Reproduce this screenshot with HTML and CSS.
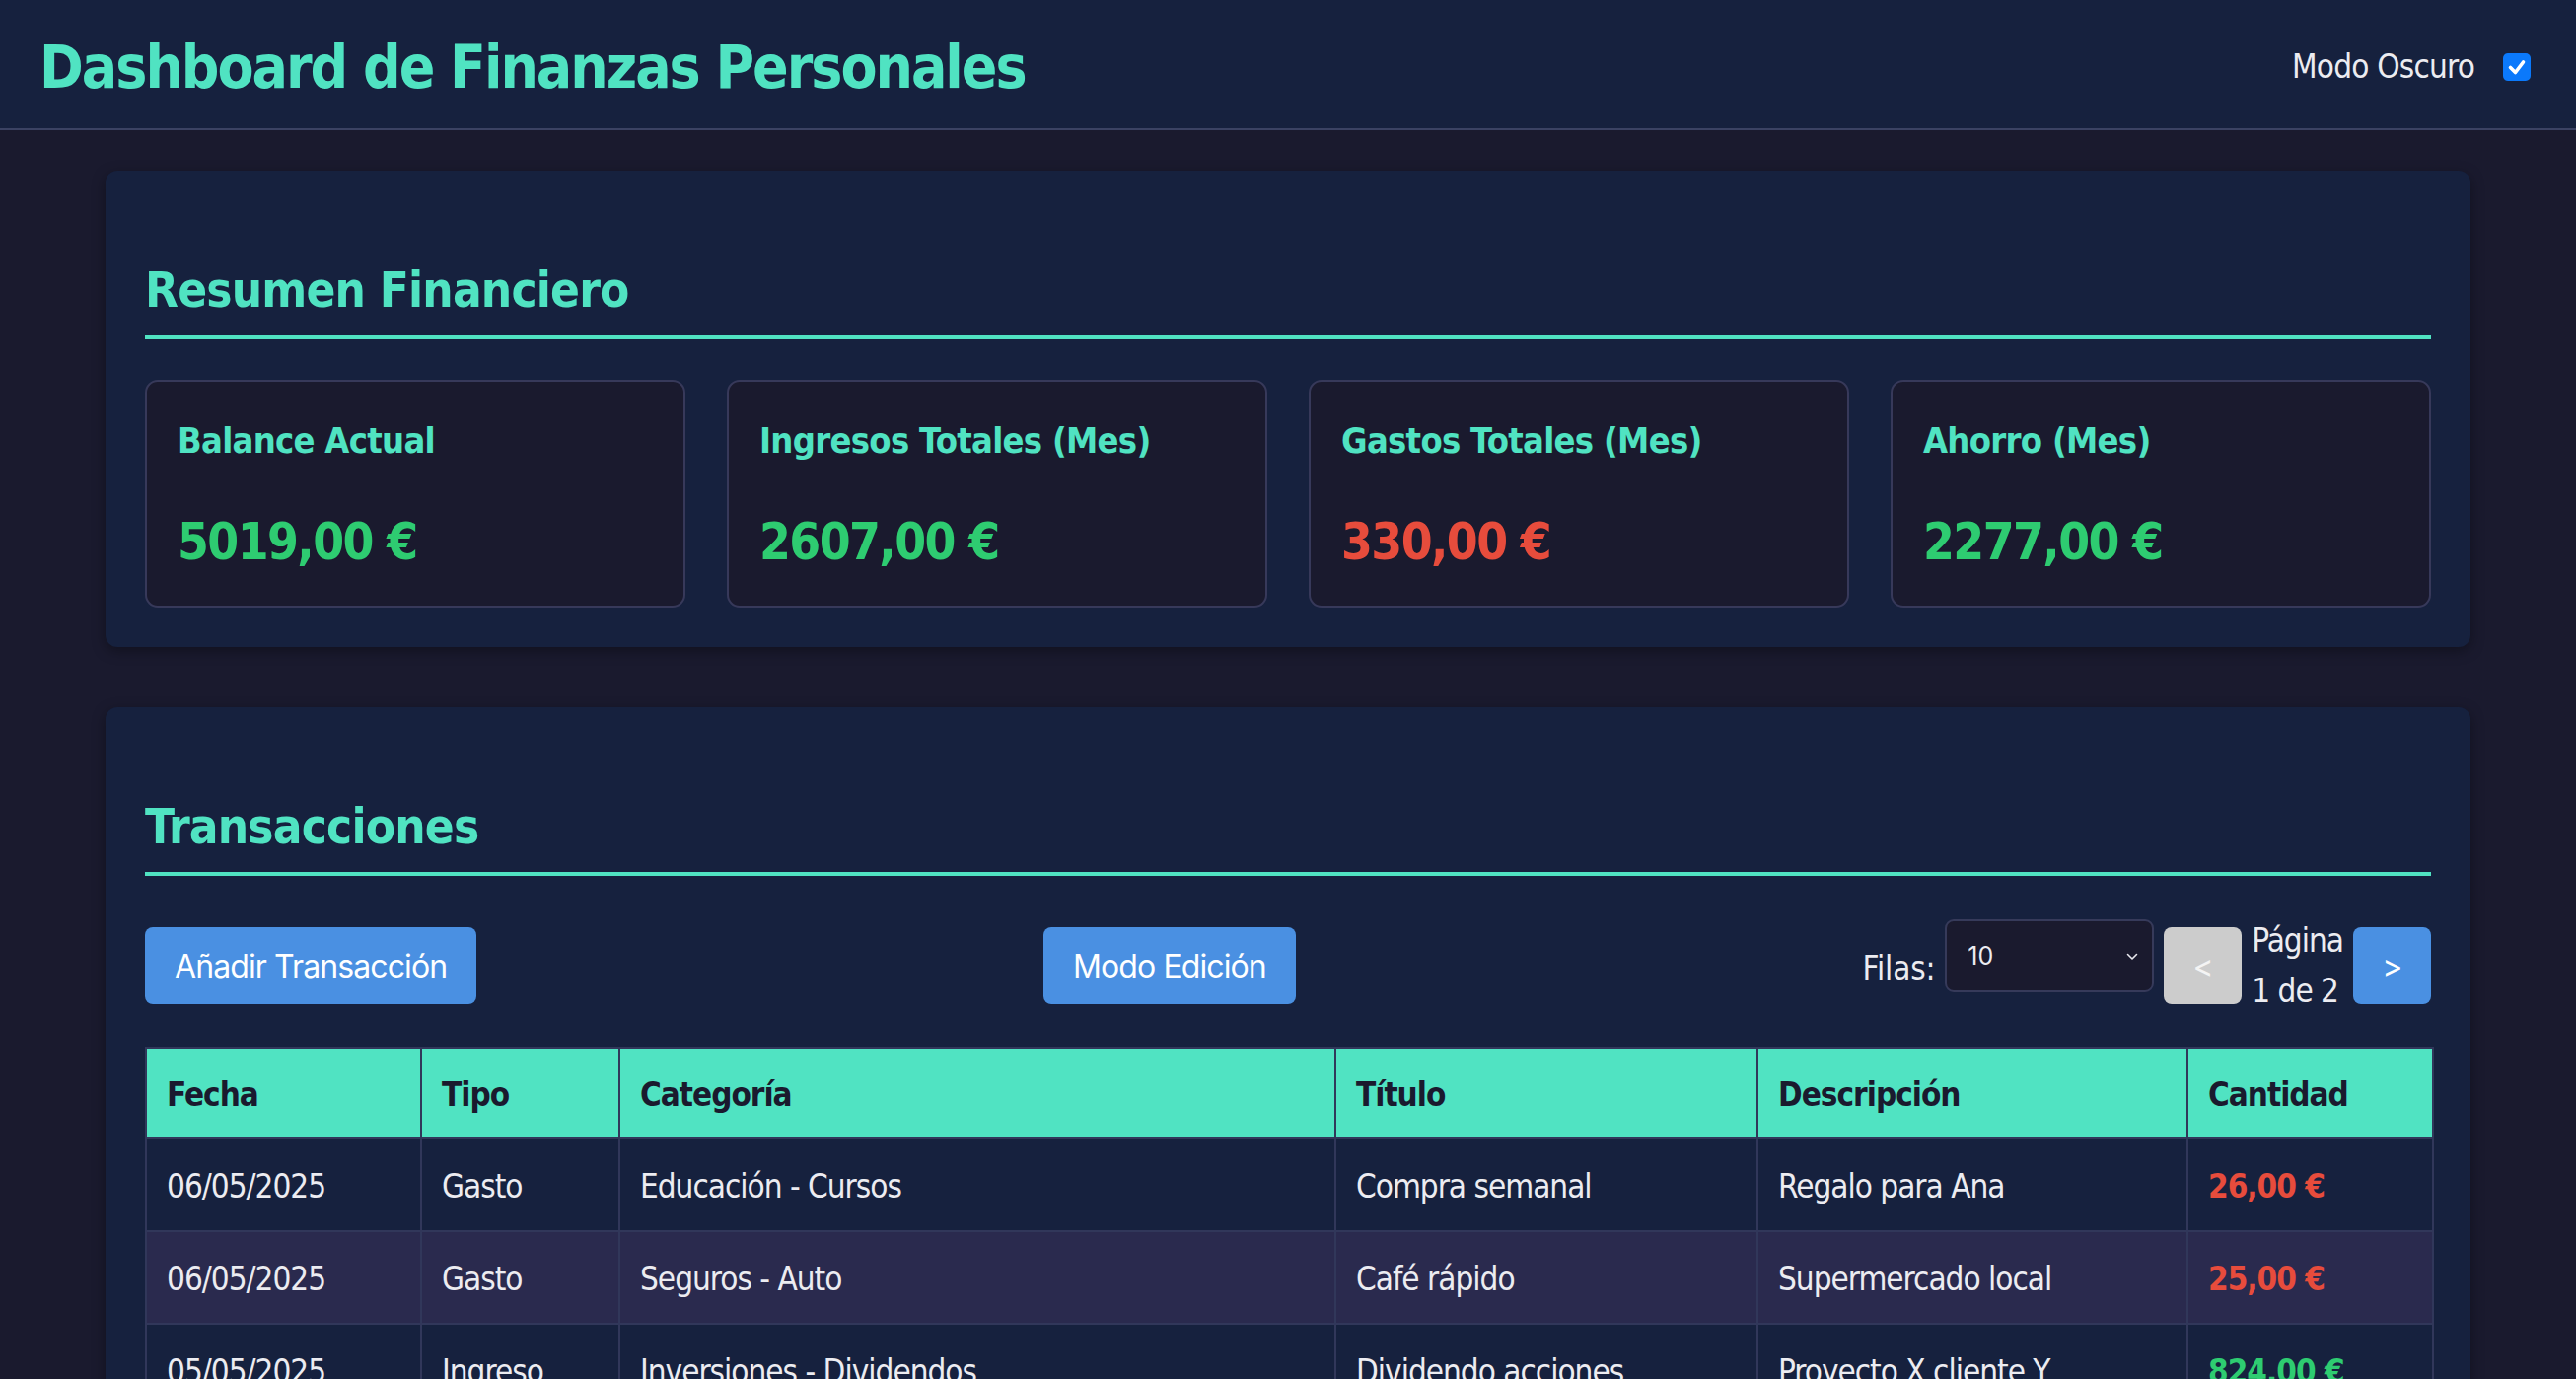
FILE: index.html
```html
<!DOCTYPE html>
<html lang="es">
<head>
<meta charset="utf-8">
<title>Dashboard de Finanzas Personales</title>
<link rel="stylesheet" href="styles.css">
</head>
<body>
<header class="topbar">
  <h1 class="app-title">Dashboard de Finanzas Personales</h1>
  <label class="theme-toggle">
    <span class="theme-label">Modo Oscuro</span>
    <span class="checkbox" role="checkbox" aria-checked="true">
      <svg viewBox="0 0 28 28" width="28" height="28"><path d="M7.5 14.5 L12.5 19.5 L20.5 9" fill="none" stroke="#fff" stroke-width="3.6" stroke-linecap="round" stroke-linejoin="round"/></svg>
    </span>
  </label>
</header>

<main class="container">
  <section class="panel">
    <h2 class="panel-title">Resumen Financiero</h2>
    <div class="summary-grid">
      <div class="summary-card">
        <h3 class="card-title">Balance Actual</h3>
        <p class="amount positive">5019,00 €</p>
      </div>
      <div class="summary-card">
        <h3 class="card-title">Ingresos Totales (Mes)</h3>
        <p class="amount positive">2607,00 €</p>
      </div>
      <div class="summary-card">
        <h3 class="card-title">Gastos Totales (Mes)</h3>
        <p class="amount negative">330,00 €</p>
      </div>
      <div class="summary-card">
        <h3 class="card-title">Ahorro (Mes)</h3>
        <p class="amount positive">2277,00 €</p>
      </div>
    </div>
  </section>

  <section class="panel">
    <h2 class="panel-title">Transacciones</h2>
    <div class="controls">
      <button class="btn btn-primary btn-offset">Añadir Transacción</button>
      <button class="btn btn-primary btn-offset">Modo Edición</button>
      <div class="pager">
        <span class="rows-label">Filas:</span>
        <div class="select-wrap">
          <select class="rows-select">
            <option>10</option>
            <option>25</option>
            <option>50</option>
          </select>
          <svg class="select-arrow" viewBox="0 0 12 8" width="12" height="8"><path d="M1.5 1.5 L6 6 L10.5 1.5" fill="none" stroke="#e8e8ee" stroke-width="1.6" stroke-linecap="round" stroke-linejoin="round"/></svg>
        </div>
        <button class="btn btn-page btn-disabled">&lt;</button>
        <span class="page-info">Página <span class="nowrap">1 de 2</span></span>
        <button class="btn btn-page btn-primary">&gt;</button>
      </div>
    </div>

    <table class="tx-table">
      <colgroup>
        <col class="c-fecha">
        <col class="c-tipo">
        <col class="c-cat">
        <col class="c-tit">
        <col class="c-desc">
        <col class="c-cant">
      </colgroup>
      <thead>
        <tr>
          <th>Fecha</th>
          <th>Tipo</th>
          <th>Categoría</th>
          <th>Título</th>
          <th>Descripción</th>
          <th>Cantidad</th>
        </tr>
      </thead>
      <tbody>
        <tr>
          <td>06/05/2025</td>
          <td>Gasto</td>
          <td>Educación - Cursos</td>
          <td>Compra semanal</td>
          <td>Regalo para Ana</td>
          <td class="money negative">26,00 €</td>
        </tr>
        <tr>
          <td>06/05/2025</td>
          <td>Gasto</td>
          <td>Seguros - Auto</td>
          <td>Café rápido</td>
          <td>Supermercado local</td>
          <td class="money negative">25,00 €</td>
        </tr>
        <tr>
          <td>05/05/2025</td>
          <td>Ingreso</td>
          <td>Inversiones - Dividendos</td>
          <td>Dividendo acciones</td>
          <td>Proyecto X cliente Y</td>
          <td class="money positive">824,00 €</td>
        </tr>
      </tbody>
    </table>
  </section>
</main>
</body>
</html>
```

FILE: styles.css
```css
* {
  box-sizing: border-box;
}

html, body {
  margin: 0;
  padding: 0;
}

body {
  background: #1a1a2e;
  color: #ececf1;
  font-family: "DejaVu Sans Condensed", "DejaVu Sans", sans-serif;
  font-size: 33px;
  line-height: 51px;
  letter-spacing: -1px;
}

/* ---------- Header ---------- */
.topbar {
  display: flex;
  justify-content: space-between;
  align-items: flex-start;
  height: 132px;
  padding: 0 46px 0 40px;
  background: #16213e;
  border-bottom: 2px solid #3b4263;
}

.app-title {
  margin: 32px 0 0;
  font-size: 60px;
  line-height: 72px;
  font-weight: bold;
  color: #50e3c2;
  letter-spacing: -2px;
}

.theme-toggle {
  display: flex;
  align-items: center;
  gap: 29px;
  margin-top: 42px;
}

.theme-label {
  line-height: 51px;
  letter-spacing: -0.8px;
}

.checkbox {
  display: flex;
  width: 28px;
  height: 28px;
  border-radius: 5px;
  background: #0b79fb;
}

/* ---------- Layout ---------- */
.container {
  width: 2398px;
  margin: 41px auto 0;
}

.panel {
  background: #16213e;
  border-radius: 12px;
  padding: 40px;
  margin-bottom: 61px;
  box-shadow: 0 4px 14px rgba(0, 0, 0, 0.35);
}

.panel-title {
  margin: 52px 0 0;
  padding-bottom: 15px;
  font-size: 49px;
  line-height: 60px;
  font-weight: bold;
  color: #50e3c2;
  border-bottom: 4px solid #50e3c2;
  letter-spacing: -0.8px;
}

/* ---------- Summary ---------- */
.summary-grid {
  display: grid;
  grid-template-columns: repeat(4, 1fr);
  gap: 42px;
  margin-top: 41px;
}

.summary-card {
  background: #1a1a2e;
  border: 2px solid #37395a;
  border-radius: 13px;
  padding: 38px 31px 33px;
}

.card-title {
  margin: 0 0 50px;
  font-size: 36px;
  line-height: 44px;
  font-weight: bold;
  color: #50e3c2;
  letter-spacing: -0.7px;
}

.amount {
  margin: 0;
  font-size: 51px;
  line-height: 62px;
  font-weight: bold;
  letter-spacing: -1.6px;
}

.positive {
  color: #2ecc71;
}

.negative {
  color: #e74c3c;
}

/* ---------- Controls ---------- */
.controls {
  display: flex;
  justify-content: space-between;
  align-items: flex-start;
  margin-top: 40px;
}

.btn {
  display: inline-flex;
  align-items: center;
  justify-content: center;
  height: 78px;
  padding: 0 30px;
  border: none;
  border-radius: 8px;
  font-family: "Inter", "Roboto", sans-serif;
  font-size: 32px;
  letter-spacing: -0.9px;
  color: #ffffff;
}

.btn-offset {
  margin-top: 12px;
}

.btn-primary {
  background: #4a90e2;
}

.btn-disabled {
  background: #cccccc;
  color: #f4f4f4;
}

.btn-page {
  width: 79px;
  padding: 0;
  margin-top: 12px;
}

.pager {
  display: flex;
  align-items: flex-start;
  gap: 10px;
}

.rows-label {
  margin-top: 28px;
  letter-spacing: -0.2px;
}

.select-wrap {
  position: relative;
  margin-top: 4px;
}

.rows-select {
  display: block;
  width: 212px;
  height: 74px;
  padding: 0 40px 0 21px;
  appearance: none;
  -webkit-appearance: none;
  background: #1a1a2e;
  color: #ececf1;
  border: 2px solid #363a5a;
  border-radius: 9px;
  font-family: "Inter", "Roboto", sans-serif;
  font-size: 25px;
}

.select-arrow {
  position: absolute;
  right: 16px;
  top: 34px;
  pointer-events: none;
}

.page-info {
  width: min-content;
  line-height: 51px;
}

.nowrap {
  white-space: nowrap;
}

/* ---------- Table ---------- */
.tx-table {
  width: 100%;
  margin-top: 31px;
  border-collapse: collapse;
  table-layout: fixed;
}

.c-fecha { width: 279px; }
.c-tipo { width: 201px; }
.c-cat { width: 726px; }
.c-tit { width: 428px; }
.c-desc { width: 436px; }
.c-cant { width: 249px; }

.tx-table th,
.tx-table td {
  border: 2px solid #31375a;
  text-align: left;
  white-space: nowrap;
  overflow: hidden;
  line-height: 50px;
}

.tx-table th {
  padding: 22px 20px 18px;
  background: #50e3c2;
  color: #1a1a2e;
  font-weight: bold;
}

.tx-table td {
  padding: 23px 20px 19px;
}

.tx-table tbody tr:nth-child(odd) {
  background: #16213e;
}

.tx-table tbody tr:nth-child(even) {
  background: #2a2a4e;
}

.tx-table .money {
  font-weight: bold;
}
```
